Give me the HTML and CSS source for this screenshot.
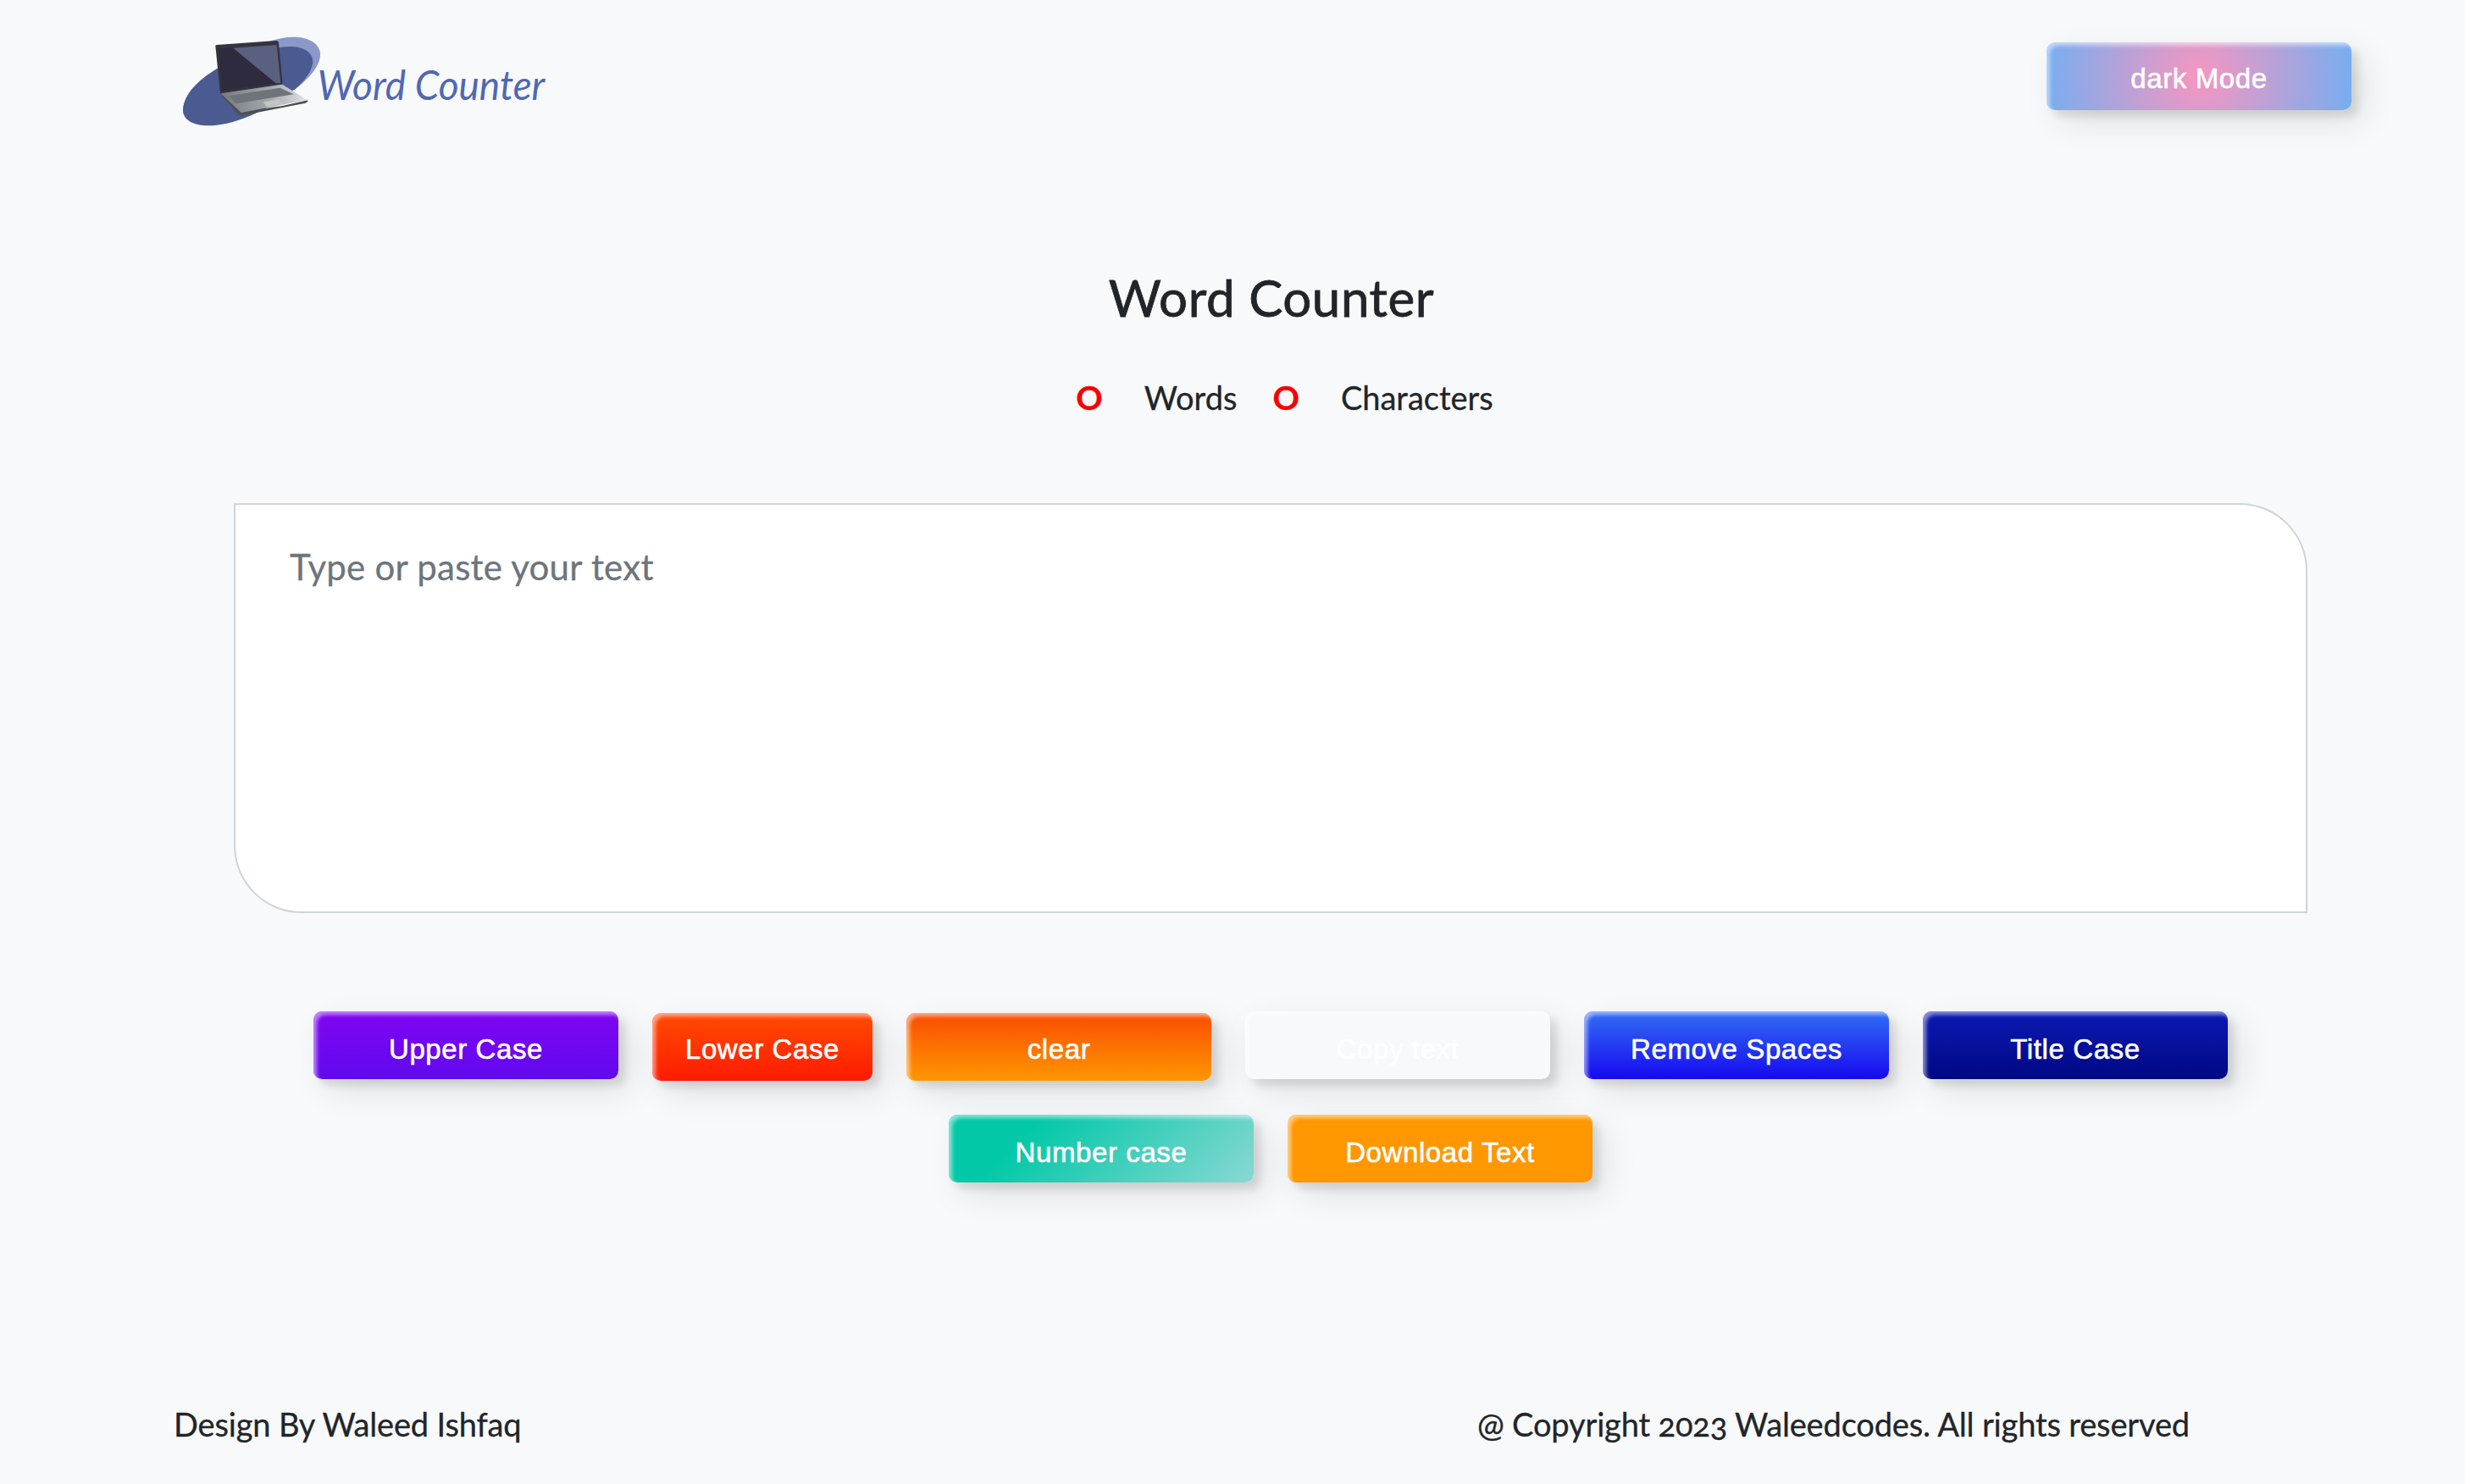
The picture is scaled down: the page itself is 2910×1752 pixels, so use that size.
FILE: index.html
```
<!DOCTYPE html>
<html lang="en">
<head>
  <meta charset="utf-8">
  <title>Word Counter</title>
  <link rel="stylesheet" href="styles.css">
</head>
<body>
  <header class="header">
    <svg class="logo" viewBox="0 0 1380 390" role="img" aria-label="Word Counter">
      <defs>
        <linearGradient id="deck" x1="0" y1="0" x2="1" y2="0">
          <stop offset="0" stop-color="#77797d"/>
          <stop offset=".6" stop-color="#a9abb0"/>
          <stop offset="1" stop-color="#e3e4e7"/>
        </linearGradient>
      </defs>
      <path fill="#8b98ca" d="M48 300C50 215 205 118 350 58C430 28 522 36 534 96C538 140 495 188 445 226L330 270L120 340Z"/>
      <path fill="#4c5a92" d="M48 300C50 245 100 194 168 154L390 78C455 68 508 84 508 130C506 160 480 196 445 226L330 300C265 332 200 355 138 355C85 355 48 335 48 300Z"/>
      <path fill="#34343f" d="M163 73Q163 69 168 69L378 54Q386 54 387 62L401 208L180 242Z"/>
      <path fill="#2e2b3f" d="M173 80L226 80L376 204L186 232Z"/>
      <path fill="#596080" d="M226 80L380 69L394 205L376 204Z"/>
      <path fill="#4d4f55" d="M180 242L240 312Q248 321 262 318L482 275Q492 271 490 265L400 285L255 305Z"/>
      <path fill="url(#deck)" d="M182 241L400 209L488 264L254 309Z"/>
      <path fill="#6d757a" d="M208 250L392 221L440 244L236 277Z"/>
      <path fill="#c3c4c8" d="M332 272L385 262L404 277L346 289Z"/>
      <text class="logo-text" x="524" y="263" textLength="806" lengthAdjust="spacingAndGlyphs">Word Counter</text>
    </svg>
    <button class="btn btn-dark">dark Mode</button>
  </header>

  <main class="main">
    <h1 class="title">Word Counter</h1>
    <div class="stats">
      <span class="count">O</span>
      <span class="label">Words</span>
      <span class="count count-next">O</span>
      <span class="label">Characters</span>
    </div>
    <textarea class="editor" placeholder="Type or paste your text"></textarea>
    <div class="actions">
      <button class="btn btn-upper">Upper Case</button>
      <button class="btn btn-lower">Lower Case</button>
      <button class="btn btn-clear">clear</button>
      <button class="btn btn-copy">Copy text</button>
      <button class="btn btn-spaces">Remove Spaces</button>
      <button class="btn btn-title">Title Case</button>
      <button class="btn btn-number">Number case</button>
      <button class="btn btn-download">Download Text</button>
    </div>
  </main>

  <footer class="footer">
    <p class="credit">Design By Waleed Ishfaq</p>
    <p class="credit">@ Copyright 2023 Waleedcodes. All rights reserved</p>
  </footer>
</body>
</html>
```
FILE: styles.css
```
* {
  box-sizing: border-box;
}

body {
  display: flex;
  flex-direction: column;
  height: 1752px;
  margin: 0;
  overflow: hidden;
  background: #f8f9fb;
  color: #212529;
  font-family: Lato, sans-serif;
  font-size: 38px;
  line-height: 57px;
  -webkit-text-stroke: 0.3px currentColor;
}

.header {
  display: flex;
  justify-content: space-between;
  align-items: flex-start;
  height: 160px;
  padding: 30px 134px 0 200px;
}

.logo {
  width: 460px;
  height: 130px;
}

.logo-text {
  fill: #5068b0;
  font: italic 400 148px Lato, sans-serif;
  -webkit-text-stroke: 0;
}

.main {
  display: flex;
  flex-direction: column;
  align-items: center;
  padding: 155px 186px 0 276px;
}

.title {
  margin: 0 -2px 0 0;
  font-size: 60px;
  font-weight: 400;
  line-height: 72px;
  letter-spacing: 0.6px;
  -webkit-text-stroke-width: 0.8px;
}

.stats {
  display: flex;
  margin-top: 54px;
  padding-left: 33px;
}

.count {
  margin-right: 49px;
  color: #f80000;
  font-size: 39px;
  font-weight: 700;
}

.count-next {
  margin-left: 42px;
}

.editor {
  width: 2448px;
  height: 484px;
  margin: 96px 0 0;
  padding: 42px 64px;
  border: 2px solid #ced4da;
  border-radius: 0 80px;
  outline: 0;
  resize: none;
  background: #fff;
  font: 400 42px/63px Lato, sans-serif;
  letter-spacing: 0.25px;
}

.editor::placeholder {
  color: #6c757d;
  opacity: 1;
}

.actions {
  display: flex;
  flex-wrap: wrap;
  justify-content: center;
  gap: 40px;
  width: 2448px;
  margin-top: 116px;
}

.btn {
  width: 360px;
  height: 80px;
  padding: 8px 0 0;
  border: 0;
  border-radius: 10px;
  color: #fff;
  font: 400 33px/37px "Liberation Sans", Arial, sans-serif;
  letter-spacing: 0.6px;
  -webkit-text-stroke: 0.6px currentColor;
  box-shadow:
    inset 4px 4px 4px 0 rgba(255, 255, 255, 0.5),
    14px 14px 40px 0 rgba(0, 0, 0, 0.1),
    8px 8px 10px 0 rgba(0, 0, 0, 0.1);
}

.btn-dark {
  margin-top: 20px;
  padding-top: 4px;
  background: radial-gradient(circle, #f796c0 0%, #76aef1 100%);
}

.btn-upper {
  background: linear-gradient(0deg, #6009f0 0%, #8105f0 100%);
}

.btn-lower {
  width: 260px;
  margin-top: 2px;
  padding-top: 4px;
  background: linear-gradient(0deg, #ff1b00 0%, #ff4b02 100%);
}

.btn-clear {
  margin-top: 2px;
  padding-top: 4px;
  background: linear-gradient(0deg, #ff9700 0%, #fb4b02 100%);
}

.btn-copy {
  background: #f8f9fb;
}

.btn-spaces {
  background: linear-gradient(0deg, #1609f0 0%, #316ef4 100%);
}

.btn-title {
  background: linear-gradient(0deg, #000883 0%, #0c19b4 100%);
}

.btn-number {
  background: linear-gradient(315deg, #89d8d3 0%, #03c8a8 74%);
}

.btn-download {
  background: #ff9700;
}

.footer {
  display: flex;
  justify-content: space-between;
  margin-top: auto;
  padding: 0 325px 42px 205px;
}

.credit {
  margin: 0;
  font-variant-numeric: oldstyle-nums;
  letter-spacing: -0.15px;
}
```
